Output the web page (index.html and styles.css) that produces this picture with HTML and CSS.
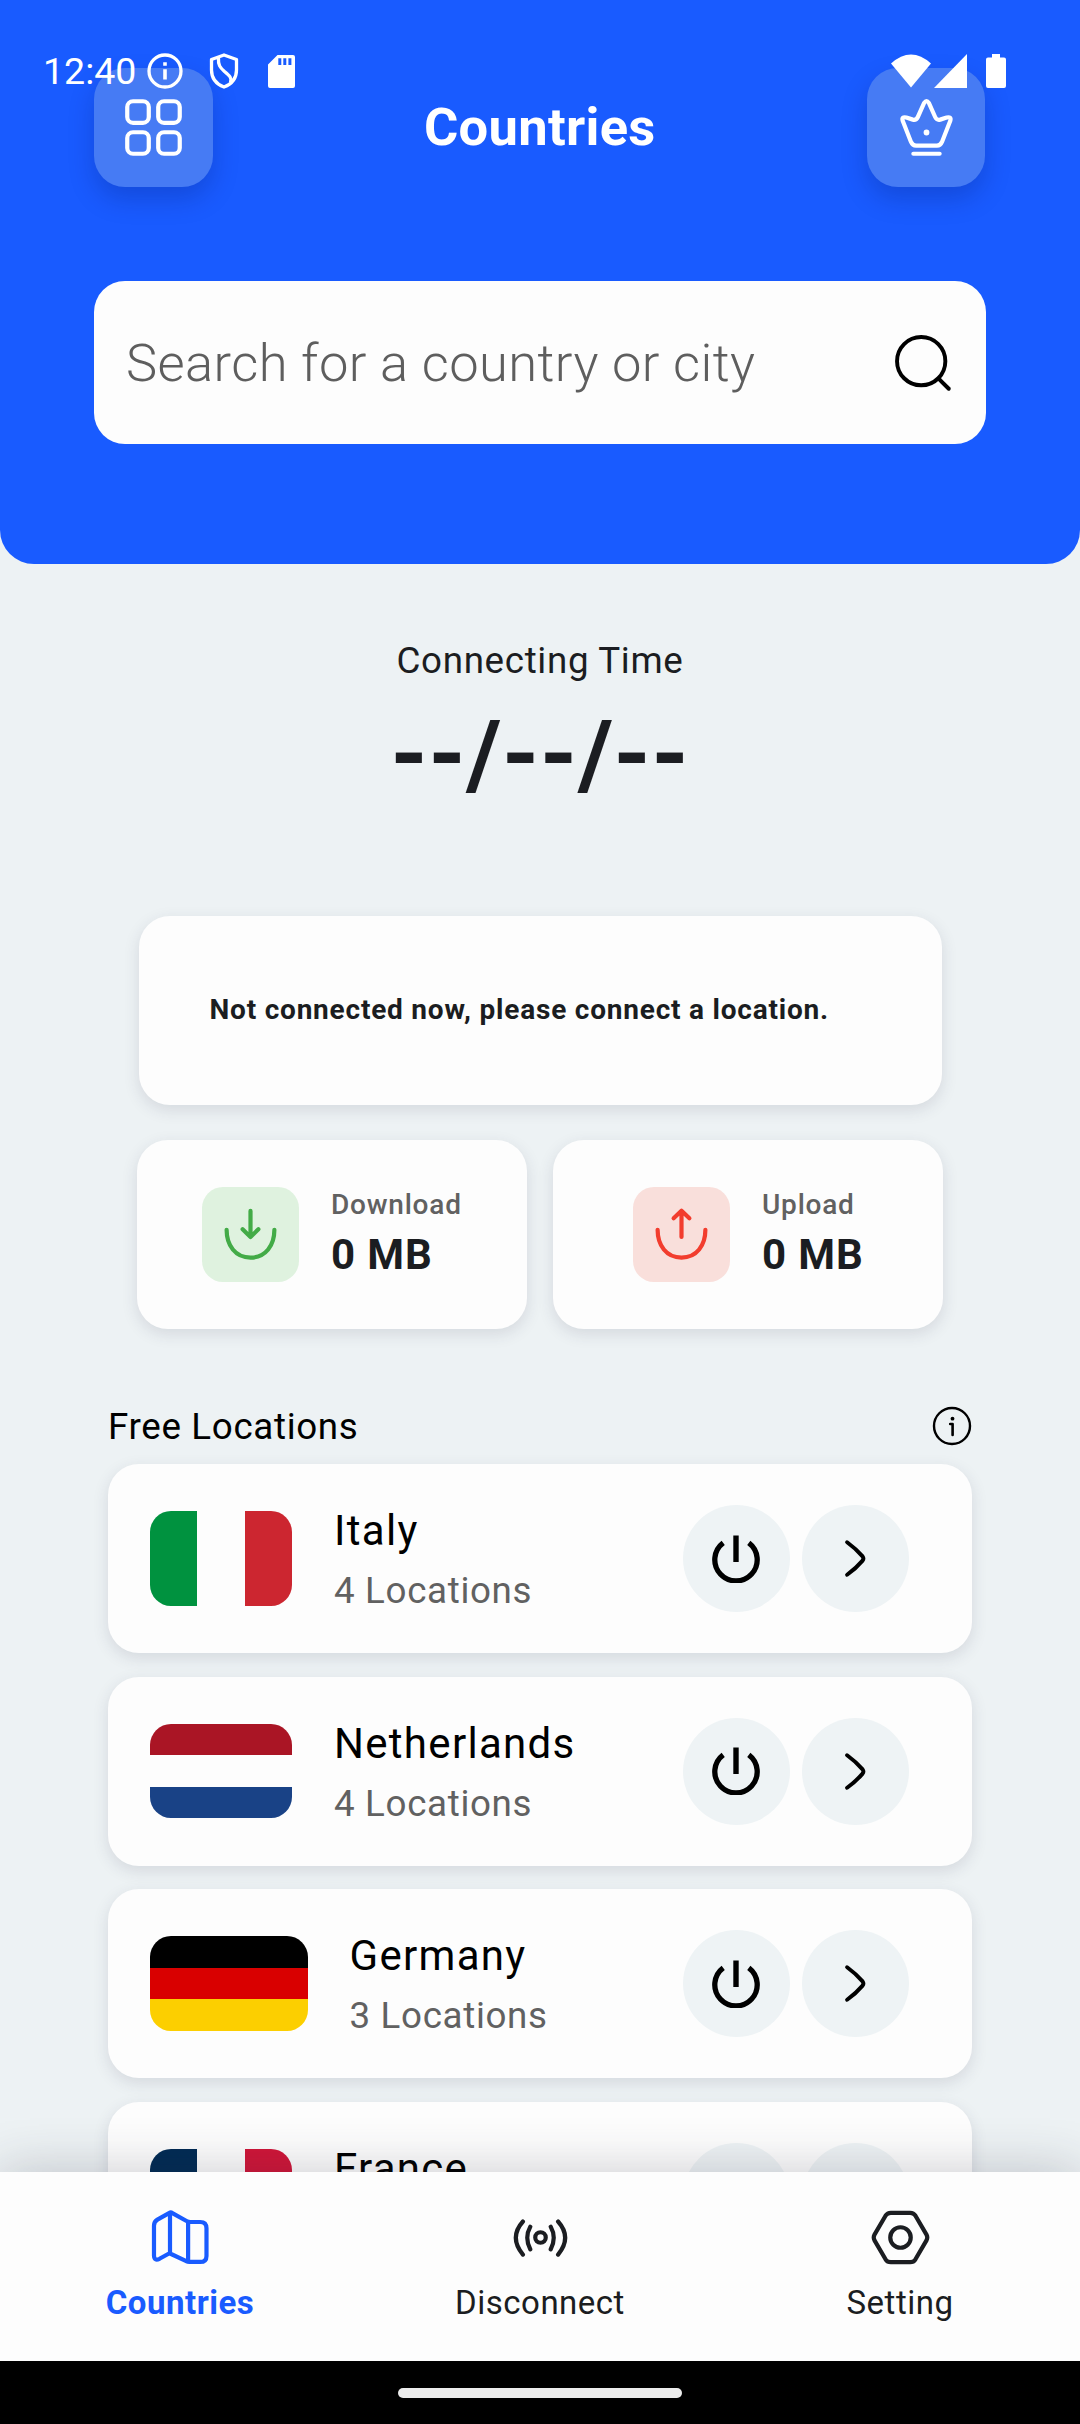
FILE: index.html
```
<!DOCTYPE html>
<html lang="en">
<head>
<meta charset="utf-8">
<title>Countries</title>
<link rel="stylesheet" href="styles.css">
</head>
<body>
<svg class="defs" width="0" height="0" aria-hidden="true">
  <symbol id="power" viewBox="0 0 48 48"><path d="M24 0.5V27" stroke-width="5.4"/><path d="M11.2 7.800A21.200 21.200 0 1 0 36.800 7.800" stroke-width="5.300"/></symbol>
  <symbol id="chevron" viewBox="0 0 24 24"><path d="M8.800 5.800C11 7.400 13 9.200 14.700 11.200Q15.300 12 14.700 12.800C13 14.800 11 16.600 8.800 18.200" stroke-width="1.500" stroke-linecap="round" stroke-linejoin="round"/></symbol>
</svg>
<div class="screen">
  <div class="status">
    <span class="time">12:40</span>
    <svg class="s-info" width="36" height="36" viewBox="0 0 36 36"><circle cx="18" cy="18" r="16" fill="none" stroke="#fff" stroke-width="3.3"/><path d="M16.200 9.200h3.600v3.600h-3.600zM16.200 16.200h3.600v10.200h-3.600z" fill="#fff"/></svg>
    <svg class="s-shield" width="30" height="36" viewBox="0 0 30 36"><path d="M15 2L27.500 6.500V17C27.500 25 23 31 15 34 7 31 2.500 25 2.500 17V6.500Z M9.500 5C9 12 11 14.500 15.500 18.500 21 23 23 25 21.500 29.500" fill="none" stroke="#fff" stroke-width="3.3" stroke-linejoin="round"/></svg>
    <svg class="s-sd" width="27" height="33" viewBox="0 0 27 33"><path fill-rule="evenodd" d="M9.500 0H25q2 0 2 2V31q0 2-2 2H2q-2 0-2-2V9.500ZM10.300 3.300V10h3V3.300ZM15.300 3.300V10h3V3.300ZM20.400 3.300V10h3V3.300Z" fill="#fff"/></svg>
    <span class="spacer"></span>
    <svg width="40" height="34" viewBox="0 0 40 34"><path d="M0 9.500Q20-8.500 40 9.500L20 33.500Z" fill="#fff"/></svg>
    <svg class="s-signal" width="33" height="34" viewBox="0 0 33 34"><path d="M33 0V34H0Z" fill="#fff"/></svg>
    <svg class="s-batt" width="20" height="34" viewBox="0 0 20 34"><path d="M6 0h8v3.500H18q2 0 2 2V32q0 2-2 2H2q-2 0-2-2V5.500q0-2 2-2h4Z" fill="#fff"/></svg>
  </div>

  <header class="header">
    <div class="topbar">
      <div class="tile"><svg class="icon" viewBox="0 0 24 24"><rect x="2" y="2" width="8.200" height="8.200" rx="2.200"/><rect x="13.800" y="2" width="8.200" height="8.200" rx="2.200"/><rect x="2" y="13.800" width="8.200" height="8.200" rx="2.200"/><rect x="13.800" y="13.800" width="8.200" height="8.200" rx="2.200"/></svg></div>
      <h1>Countries</h1>
      <div class="tile"><svg class="icon" viewBox="0 0 24 24"><path d="M11.100 2.600Q12 1.300 12.900 2.600L15.300 8Q15.900 9.300 17.200 9L19.700 8.200Q21.500 7.800 21.100 9.300L17.900 17.500Q17.300 18.900 16 18.900H8Q6.700 18.900 6.100 17.500L2.900 9.300Q2.500 7.800 4.300 8.200L6.800 9Q8.100 9.300 8.700 8Z"/><path d="M7 22H17"/><circle cx="12" cy="13.900" r="1.100" class="dot"/></svg></div>
    </div>
    <div class="search"><span>Search for a country or city</span><svg class="icon" viewBox="0 0 24 24"><circle cx="11.500" cy="11.500" r="9.200"/><path d="M22 22L18.500 18.500"/></svg></div>
  </header>

  <main class="content">
    <div class="timer"><span class="timer-label">Connecting Time</span><span class="timer-value">--/--/--</span></div>
    <div class="card notice"><span>Not connected now, please connect a location.</span></div>
    <div class="stats">
      <div class="card stat">
        <div class="badge down"><svg class="icon" viewBox="0 0 24 24"><path d="M12 3.400V13.200M9 10.400L12 13.300 15 10.400M2.900 10.600C2.900 16.500 6.200 21.200 12 21.200S21.100 16.500 21.100 10.600"/></svg></div>
        <div class="stat-text"><span class="stat-label">Download</span><span class="stat-value">0 MB</span></div>
      </div>
      <div class="card stat">
        <div class="badge up"><svg class="icon" viewBox="0 0 24 24"><path d="M12 13.300V3.400M9 6.200L12 3.300 15 6.200M2.900 10.600C2.900 16.500 6.200 21.200 12 21.200S21.100 16.500 21.100 10.600"/></svg></div>
        <div class="stat-text"><span class="stat-label">Upload</span><span class="stat-value">0 MB</span></div>
      </div>
    </div>
    <div class="section-head"><span>Free Locations</span><svg width="40" height="40" viewBox="0 0 40 40"><circle cx="20" cy="20" r="18" fill="none" stroke="#000" stroke-width="2.400"/><circle cx="20.500" cy="12.700" r="1.900"/><path d="M18.200 18H20.600V29" fill="none" stroke="#000" stroke-width="2.600" stroke-linecap="round" stroke-linejoin="round"/></svg></div>
    <div class="list">
      <div class="card row"><div class="flag it"></div><div class="row-text"><span class="name">Italy</span><span class="sub">4 Locations</span></div><div class="round"><svg class="power"><use href="#power"/></svg></div><div class="round"><svg class="chev"><use href="#chevron"/></svg></div></div>
      <div class="card row"><div class="flag nl"></div><div class="row-text"><span class="name">Netherlands</span><span class="sub">4 Locations</span></div><div class="round"><svg class="power"><use href="#power"/></svg></div><div class="round"><svg class="chev"><use href="#chevron"/></svg></div></div>
      <div class="card row"><div class="flag de"></div><div class="row-text"><span class="name">Germany</span><span class="sub">3 Locations</span></div><div class="round"><svg class="power"><use href="#power"/></svg></div><div class="round"><svg class="chev"><use href="#chevron"/></svg></div></div>
      <div class="card row"><div class="flag fr"></div><div class="row-text"><span class="name">France</span></div><div class="round"></div><div class="round"></div></div>
    </div>
  </main>

  <nav class="nav">
    <div class="tab active"><svg class="icon" viewBox="0 0 24 24"><path d="M7.800 2.600L3.200 5.200Q1.900 6 1.900 7.500V18.900Q2 21.100 4 20.100L7.800 18 14.200 21Q14.700 21.300 15.400 21.300H19.500Q21.900 21.300 21.900 19V8.500Q21.900 6.100 19.500 6.100H15.800Q15 6.100 14.300 5.700L8.900 2.700Q8.300 2.300 7.800 2.600M8 2.600V18M14.900 6.100V21.300"/></svg><span>Countries</span></div>
    <div class="tab"><svg class="icon" viewBox="0 0 24 24"><circle cx="12" cy="12" r="2"/><path d="M8.100 7.900Q5.800 12 8.100 16.500M15.900 7.900Q18.200 12 15.900 16.500M5.300 5.900Q-0.100 12 5.300 18.500M18.700 5.900Q24.100 12 18.700 18.500"/></svg><span>Disconnect</span></div>
    <div class="tab"><svg class="icon" viewBox="0 0 24 24"><path d="M8.300 2.600H15.700Q17 2.600 17.700 3.700L21.900 10.900Q22.500 12 21.900 13.100L17.700 20.300Q17 21.400 15.700 21.400H8.300Q7 21.400 6.300 20.300L2.100 13.100Q1.500 12 2.100 10.900L6.300 3.700Q7 2.600 8.300 2.600Z"/><circle cx="12" cy="12" r="3.900"/></svg><span>Setting</span></div>
  </nav>
  <div class="gesture"><div class="handle"></div></div>
</div>
</body>
</html>
```
FILE: styles.css
```
* { box-sizing: border-box; }
body { margin: 0; background: #000; font-family: Roboto, sans-serif; }
.defs { position: absolute; }
.screen { position: relative; width: 1080px; height: 2424px; display: flex; flex-direction: column; overflow: hidden; background: #edf2f4; }
svg { display: block; flex: none; }
.icon { width: 63px; height: 63px; fill: none; stroke: currentColor; stroke-width: 1.6; stroke-linecap: round; stroke-linejoin: round; }
.dot { fill: currentColor; stroke: none; }

.status { position: absolute; z-index: 2; top: 50px; left: 0; width: 1080px; height: 42px; padding: 0 74px 0 43px; display: flex; align-items: center; color: #fff; }
.time { width: 104px; font-size: 37.5px; line-height: 42px; }
.s-shield { margin-left: 26px; }
.s-sd { margin-left: 29px; }
.spacer { flex: 1; }
.s-signal { margin-left: 3px; }
.s-batt { margin-left: 19px; }

.header { height: 564px; flex: none; padding: 68px 94.5px 0 94px; background: #195bff; border-radius: 0 0 34px 34px; color: #fff; }
.topbar { display: flex; align-items: center; justify-content: space-between; }
.tile { width: 118.5px; height: 118.5px; border-radius: 31px; background: #467bf4; display: flex; align-items: center; justify-content: center; box-shadow: 0 12px 26px rgba(0, 20, 90, .22); }
h1 { margin: 0; font-size: 52.5px; line-height: 60px; font-weight: 700; letter-spacing: .3px; }
.search { margin-top: 94.5px; height: 163px; padding: 0 32px; display: flex; align-items: center; justify-content: space-between; background: #fdfdfd; border-radius: 31px; color: #000; }
.search span { font-size: 52.5px; font-weight: 300; color: #5e5e5e; letter-spacing: .4px; }
.search .icon { stroke-width: 1.5; }

.content { flex: 1; min-height: 0; overflow: hidden; color: #1b1d21; }
.timer { display: flex; flex-direction: column; align-items: center; padding-top: 75px; }
.timer-label { font-size: 36.75px; line-height: 44px; letter-spacing: .66px; }
.timer-value { font-size: 94.5px; line-height: 112px; margin-top: 16px; font-weight: 700; letter-spacing: .66px; }
.card { background: #fdfdfd; border-radius: 31px; box-shadow: 0 5px 16px rgba(50, 50, 80, .13); }
.notice { margin: 105px 138.5px 0; height: 189px; padding: 0 0 3px 71px; display: flex; align-items: center; font-size: 28px; font-weight: 700; letter-spacing: .79px; }
.stats { display: grid; grid-template-columns: 390px 390px; gap: 26px; padding: 35px 137px 0; }
.stat { height: 189px; display: flex; align-items: center; justify-content: flex-start; padding-left: 65px; }
.stat + .stat { padding-left: 80px; }
.badge { width: 97px; height: 95px; border-radius: 21px; display: flex; align-items: center; justify-content: center; }
.badge .icon { margin-top: -2px; }
.down { background: #dff2df; color: #43ab47; }
.up { background: #f9dfdb; color: #f23d2e; }
.stat-text { margin-left: 32px; padding-bottom: 4px; display: flex; flex-direction: column; }
.stat-label { font-size: 28px; line-height: 40px; font-weight: 500; color: #616161; letter-spacing: .79px; }
.stat-value { font-size: 42px; line-height: 50px; margin-top: 5px; font-weight: 700; letter-spacing: .9px; }
.section-head { display: flex; align-items: center; justify-content: space-between; height: 44px; margin: 75px 108px 0; color: #000; font-size: 36.75px; letter-spacing: .66px; }
.list { display: flex; flex-direction: column; gap: 23.5px; padding: 16px 108px 0; }
.row { height: 189px; flex: none; display: flex; align-items: center; padding: 0 63px 0 42px; color: #000; }
.flag { width: 142px; height: 94.5px; border-radius: 21px; }
.it { background: linear-gradient(90deg, #00923f 33.3%, #fdfdfd 33.3% 66.6%, #cc2630 66.6%); }
.nl { background: linear-gradient(#aa1525 33.3%, #fdfdfd 33.3% 66.6%, #194286 66.6%); }
.de { width: 157.5px; background: linear-gradient(#000 33.3%, #d90000 33.3% 66.6%, #fccf00 66.6%); }
.fr { background: linear-gradient(90deg, #002b54 33.3%, #fdfdfd 33.3% 66.6%, #d01538 66.6%); }
.row-text { flex: 1; align-self: flex-start; padding-top: 42px; margin-left: 42px; display: flex; flex-direction: column; }
.name { font-size: 42px; line-height: 50px; letter-spacing: 1.3px; }
.sub { font-size: 36.75px; line-height: 44px; margin-top: 13px; color: #616161; letter-spacing: .66px; }
.round { width: 107px; height: 107px; border-radius: 50%; background: #eef3f5; display: flex; align-items: center; justify-content: center; }
.round + .round { margin-left: 12px; }
.power { width: 48px; height: 48px; margin-right: 1px; fill: none; stroke: #000; }
.chev { width: 63px; height: 63px; fill: none; stroke: #000; }

.nav { position: relative; height: 189px; flex: none; display: grid; grid-template-columns: repeat(3, 1fr); background: #fdfdfd; box-shadow: 0 0 50px rgba(40, 40, 60, .24); color: #1b1d21; }
.tab { display: flex; flex-direction: column; align-items: center; padding-top: 34px; }
.tab span { margin-top: 14px; font-size: 33px; line-height: 40px; letter-spacing: .5px; }
.active { color: #195bff; font-weight: 700; }
.gesture { position: relative; height: 63px; flex: none; background: #000; display: flex; align-items: center; justify-content: center; }
.handle { width: 284px; height: 10px; border-radius: 5px; background: #ececec; }
```
